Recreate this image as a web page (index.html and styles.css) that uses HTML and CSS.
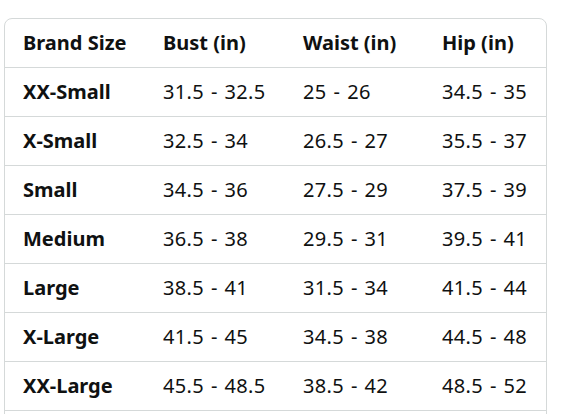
FILE: index.html
```html
<!DOCTYPE html>
<html lang="en">
<head>
    <meta charset="UTF-8">
    <title>Size chart</title>
    <link rel="stylesheet" href="styles.css">
</head>
<body>
<div class="chart">
    <table class="sizes">
        <colgroup>
            <col class="c-size"><col class="c-bust"><col class="c-waist"><col>
        </colgroup>
        <thead>
        <tr><th>Brand Size</th><th>Bust (in)</th><th>Waist (in)</th><th>Hip (in)</th></tr>
        </thead>
        <tbody>
        <tr><th>XX-Small</th><td>31.5 - 32.5</td><td>25 - 26</td><td>34.5 - 35</td></tr>
        <tr><th>X-Small</th><td>32.5 - 34</td><td>26.5 - 27</td><td>35.5 - 37</td></tr>
        <tr><th>Small</th><td>34.5 - 36</td><td>27.5 - 29</td><td>37.5 - 39</td></tr>
        <tr><th>Medium</th><td>36.5 - 38</td><td>29.5 - 31</td><td>39.5 - 41</td></tr>
        <tr><th>Large</th><td>38.5 - 41</td><td>31.5 - 34</td><td>41.5 - 44</td></tr>
        <tr><th>X-Large</th><td>41.5 - 45</td><td>34.5 - 38</td><td>44.5 - 48</td></tr>
        <tr><th>XX-Large</th><td>45.5 - 48.5</td><td>38.5 - 42</td><td>48.5 - 52</td></tr>
        <tr><th>&nbsp;</th><td></td><td></td><td></td></tr>
        </tbody>
    </table>
</div>
</body>
</html>
```
FILE: styles.css
```css
body{
    margin:0;
    background:#fff;
    font-family:"Noto Sans", sans-serif;
    color:#0f1111;
}
.chart{
    padding:18px 0 0 4px;
}
.sizes{
    width:543px;
    border:1px solid #d5d9d9;
    border-radius:8px;
    border-collapse:separate;
    border-spacing:0;
    table-layout:fixed;
}
.c-size{width:140px;}
.c-bust{width:140px;}
.c-waist{width:139px;}
.sizes th,.sizes td{
    height:46px;
    padding:0 0 2px 18px;
    border-bottom:1px solid #d5d9d9;
    text-align:left;
    font-size:20px;
    white-space:nowrap;
}
.sizes th{
    font-weight:700;
}
.sizes td{
    font-weight:400;
    letter-spacing:0.3px;
    word-spacing:1.5px;
}
```
